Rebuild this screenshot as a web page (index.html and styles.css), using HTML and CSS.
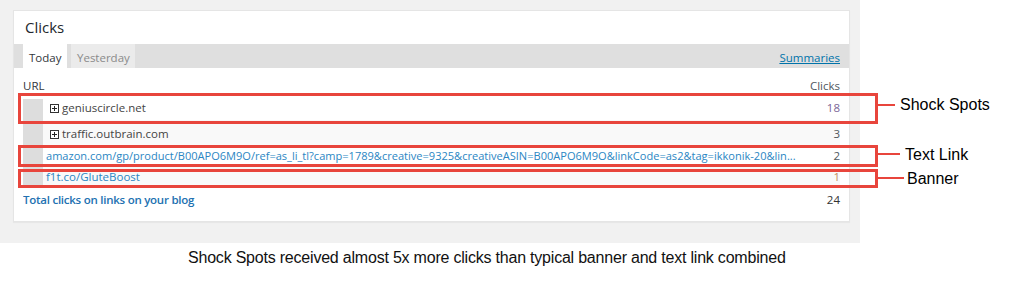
FILE: index.html
```html
<!DOCTYPE html>
<html>
<head>
<meta charset="utf-8">
<link rel="stylesheet" href="styles.css">
</head>
<body>
<div class="page">
  <div class="panel">
    <div class="card">
      <h2 class="card-title">Clicks</h2>
      <div class="tabs">
        <span class="tab tab-active">Today</span>
        <span class="tab tab-idle">Yesterday</span>
        <a class="summaries" href="#">Summaries</a>
      </div>
      <div class="stats">
        <div class="row row-head">
          <span class="cell-url">URL</span>
          <span class="cell-count">Clicks</span>
        </div>
        <div class="row row-1">
          <span class="gutter"></span>
          <span class="cell-url plain"><svg class="expand" width="9" height="9" viewBox="0 0 9 9"><rect x="0.5" y="0.5" width="8" height="8" fill="#fff" stroke="#333"/><path d="M2 4.5h5M4.5 2v5" stroke="#222" stroke-width="1"/></svg>geniuscircle.net</span>
          <span class="cell-count num-visited">18</span>
        </div>
        <div class="row row-2 alt">
          <span class="gutter"></span>
          <span class="cell-url plain"><svg class="expand" width="9" height="9" viewBox="0 0 9 9"><rect x="0.5" y="0.5" width="8" height="8" fill="#fff" stroke="#333"/><path d="M2 4.5h5M4.5 2v5" stroke="#222" stroke-width="1"/></svg>traffic.outbrain.com</span>
          <span class="cell-count">3</span>
        </div>
        <div class="row row-3">
          <span class="gutter"></span>
          <span class="cell-url link long">amazon.com/gp/product/B00APO6M9O/ref=as_li_tl?camp=1789&amp;creative=9325&amp;creativeASIN=B00APO6M9O&amp;linkCode=as2&amp;tag=ikkonik-20&amp;lin...</span>
          <span class="cell-count">2</span>
        </div>
        <div class="row row-4 alt">
          <span class="gutter"></span>
          <span class="cell-url link">f1t.co/GluteBoost</span>
          <span class="cell-count num-orange">1</span>
        </div>
        <div class="row row-total">
          <span class="cell-url total">Total clicks on links on your blog</span>
          <span class="cell-count">24</span>
        </div>
      </div>
    </div>
  </div>
  <p class="caption">Shock Spots received almost 5x more clicks than typical banner and text link combined</p>

  <div class="mark mark-1"></div>
  <div class="mark mark-2"></div>
  <div class="mark mark-3"></div>
  <div class="connector con-1"></div>
  <div class="connector con-2"></div>
  <div class="connector con-3"></div>
  <span class="note note-1">Shock Spots</span>
  <span class="note note-2">Text Link</span>
  <span class="note note-3">Banner</span>
</div>
</body>
</html>
```
FILE: styles.css
```css
html, body {
  margin: 0;
  padding: 0;
  background: #fff;
}

.page {
  position: relative;
  width: 1023px;
  height: 287px;
  overflow: hidden;
}

.panel {
  width: 860px;
  height: 243px;
  background: #f1f1f1;
  padding: 10px 10px 0 13px;
  box-sizing: border-box;
}

.card {
  width: 837px;
  height: 212px;
  background: #fff;
  border: 1px solid #e5e5e5;
  box-shadow: 0 1px 1px rgba(0, 0, 0, 0.04);
  box-sizing: border-box;
  font-family: "Open Sans", "Noto Sans", sans-serif;
  font-size: 11.5px;
  color: #32373c;
}

.card-title {
  margin: 0;
  padding: 7px 11px 7px;
  font-size: 15px;
  line-height: 19px;
  font-weight: 400;
  color: #23282d;
}

.tabs {
  display: flex;
  align-items: stretch;
  height: 24px;
  background: #dfdfdf;
  padding-left: 9px;
  gap: 4px;
}

.tab {
  padding: 4px 6px 0;
  line-height: 20px;
  box-sizing: border-box;
}

.tab-active {
  width: 44px;
  background: #fff;
  color: #32373c;
}

.tab-idle {
  width: 64px;
  background: #ebebeb;
  color: #8a8a8a;
}

.summaries {
  margin-left: auto;
  padding: 4px 9px 0 0;
  line-height: 20px;
  color: #0073aa;
  text-decoration: underline;
}

.stats {
  padding: 0 9px 0 9px;
}

.row {
  display: flex;
  align-items: flex-start;
}

.row-head {
  height: 31px;
  padding-top: 11px;
  box-sizing: border-box;
  line-height: 14px;
  color: #32373c;
}

.cell-url {
  flex: 1;
  white-space: nowrap;
  overflow: hidden;
  line-height: 14px;
}

.cell-count {
  line-height: 14px;
  text-align: right;
  color: #50575e;
}

.gutter {
  width: 20px;
  align-self: stretch;
  background: #dddddd;
  flex: none;
}

.row-1 { height: 21px; }
.row-1 .cell-url, .row-1 .cell-count { margin-top: 2px; }
.row-2 { height: 25px; }
.row-2 .cell-url, .row-2 .cell-count { margin-top: 7px; }
.row-3 { height: 20px; }
.row-3 .cell-url, .row-3 .cell-count { margin-top: 4px; }
.row-4 { height: 22px; }
.row-4 .cell-url, .row-4 .cell-count { margin-top: 5px; }
.row-total { height: 23px; padding-top: 6px; box-sizing: border-box; }

.alt {
  background: #f9f9f9;
}

.plain {
  padding-left: 7px;
  color: #444;
  display: flex;
  align-items: center;
  gap: 3px;
}

.expand {
  flex: none;
}

.link {
  padding-left: 3px;
  color: #2b86c3;
}

.long {
  font-size: 11.05px;
}

.total {
  color: #2271b1;
  font-weight: 600;
  letter-spacing: -0.25px;
}

.num-visited { color: #7a6596; }
.num-orange { color: #c28a5c; }
.row-total .cell-count { color: #333; }

.caption {
  margin: 6px 0 0;
  padding-left: 188px;
  font-family: "Liberation Sans", Arial, sans-serif;
  font-size: 16px;
  line-height: 18px;
  letter-spacing: -0.21px;
  color: #111;
}

.mark {
  position: absolute;
  left: 18px;
  width: 860px;
  border: 3px solid #e8453c;
  box-sizing: border-box;
}

.mark-1 { top: 93px; height: 31px; }
.mark-2 { top: 145px; height: 22px; }
.mark-3 { top: 169px; height: 19px; }

.connector {
  position: absolute;
  left: 878px;
  height: 2px;
  background: #e8453c;
}

.con-1 { top: 104px; width: 17px; }
.con-2 { top: 153px; width: 22px; }
.con-3 { top: 177px; width: 26px; }

.note {
  position: absolute;
  font-family: "Liberation Sans", Arial, sans-serif;
  font-size: 16px;
  line-height: 18px;
  color: #000;
}

.note-1 { left: 900px; top: 96px; }
.note-2 { left: 905px; top: 146px; }
.note-3 { left: 907px; top: 170px; }
```
